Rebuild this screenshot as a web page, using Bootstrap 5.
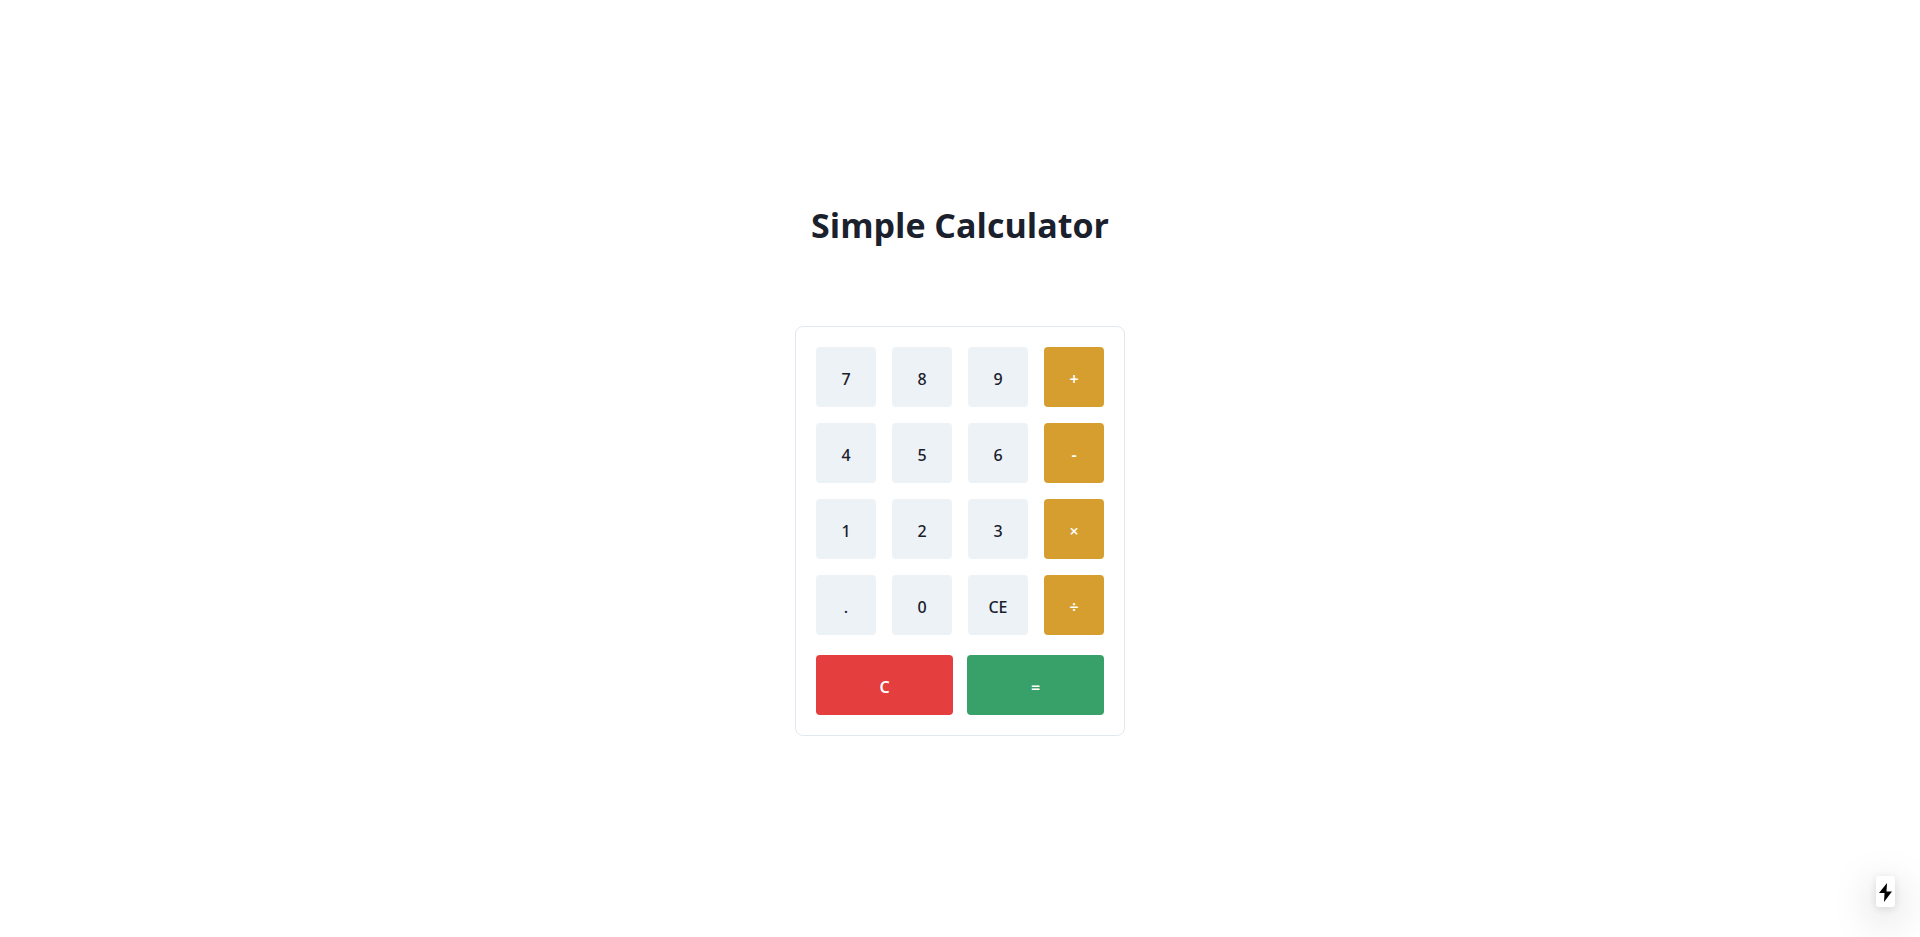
<!DOCTYPE html>
<html lang="en">
<head>
<meta charset="utf-8">
<meta name="viewport" content="width=device-width, initial-scale=1">
<title>Simple Calculator</title>
<link href="https://cdn.jsdelivr.net/npm/bootstrap@5.3.0/dist/css/bootstrap.min.css" rel="stylesheet">
<style>
body { font-family: "Open Sans", "Noto Sans", sans-serif; color: #1a202c; line-height: 24px; }
.calc-title { font-size: 34px; line-height: 49px; margin-bottom: 76px; }
.calc { border: 1px solid #e2e8f0; border-radius: 8px; padding: 20px; }
.keys { display: grid; grid-template-columns: repeat(4, 60px); gap: 16px; }
.actions { display: grid; grid-template-columns: 1fr 1fr; gap: 14px; margin-top: 20px; }
.key { height: 60px; padding: 4px 0 0; border: 0; border-radius: 4px; font-family: "Noto Sans", "Open Sans", sans-serif; font-size: 16px; font-weight: 500; line-height: 20px;
  --bs-btn-color: #1a202c; --bs-btn-bg: #edf2f7; --bs-btn-hover-bg: #e2e8f0; }
.key-op, .key-clear, .key-equals { --bs-btn-color: #fff; --bs-btn-hover-color: #fff; font-weight: 600; }
.key-op { --bs-btn-bg: #d69e2e; --bs-btn-hover-bg: #b7791f; }
.key-clear { --bs-btn-bg: #e53e3e; --bs-btn-hover-bg: #c53030; }
.key-equals { --bs-btn-bg: #38a169; --bs-btn-hover-bg: #2f855a; }
.build-badge { right: 25px; bottom: 30px; padding: 7px 3px 5px; border-radius: 3px; background: #fff; color: #000;
  box-shadow: 0 11px 40px 0 rgba(0,0,0,.25), 0 2px 10px 0 rgba(0,0,0,.12); }
</style>
</head>
<body>
<main class="min-vh-100 d-flex flex-column align-items-center justify-content-center">
  <h1 class="calc-title fw-bold text-center">Simple Calculator</h1>
  <section class="calc" aria-label="Calculator">
    <div class="keys">
      <button type="button" class="btn key">7</button>
      <button type="button" class="btn key">8</button>
      <button type="button" class="btn key">9</button>
      <button type="button" class="btn key key-op">+</button>
      <button type="button" class="btn key">4</button>
      <button type="button" class="btn key">5</button>
      <button type="button" class="btn key">6</button>
      <button type="button" class="btn key key-op">-</button>
      <button type="button" class="btn key">1</button>
      <button type="button" class="btn key">2</button>
      <button type="button" class="btn key">3</button>
      <button type="button" class="btn key key-op">×</button>
      <button type="button" class="btn key">.</button>
      <button type="button" class="btn key">0</button>
      <button type="button" class="btn key">CE</button>
      <button type="button" class="btn key key-op">÷</button>
    </div>
    <div class="actions">
      <button type="button" class="btn key key-clear">C</button>
      <button type="button" class="btn key key-equals">=</button>
    </div>
  </section>
</main>
<div class="build-badge position-fixed">
  <svg class="d-block" width="13" height="19" viewBox="0 0 13 19" fill="currentColor" aria-hidden="true"><path d="M8 0 0 10h5.500L5 19 13 8.500H7.500z"/></svg>
</div>
<script src="https://cdn.jsdelivr.net/npm/bootstrap@5.3.0/dist/js/bootstrap.bundle.min.js"></script>
</body>
</html>
